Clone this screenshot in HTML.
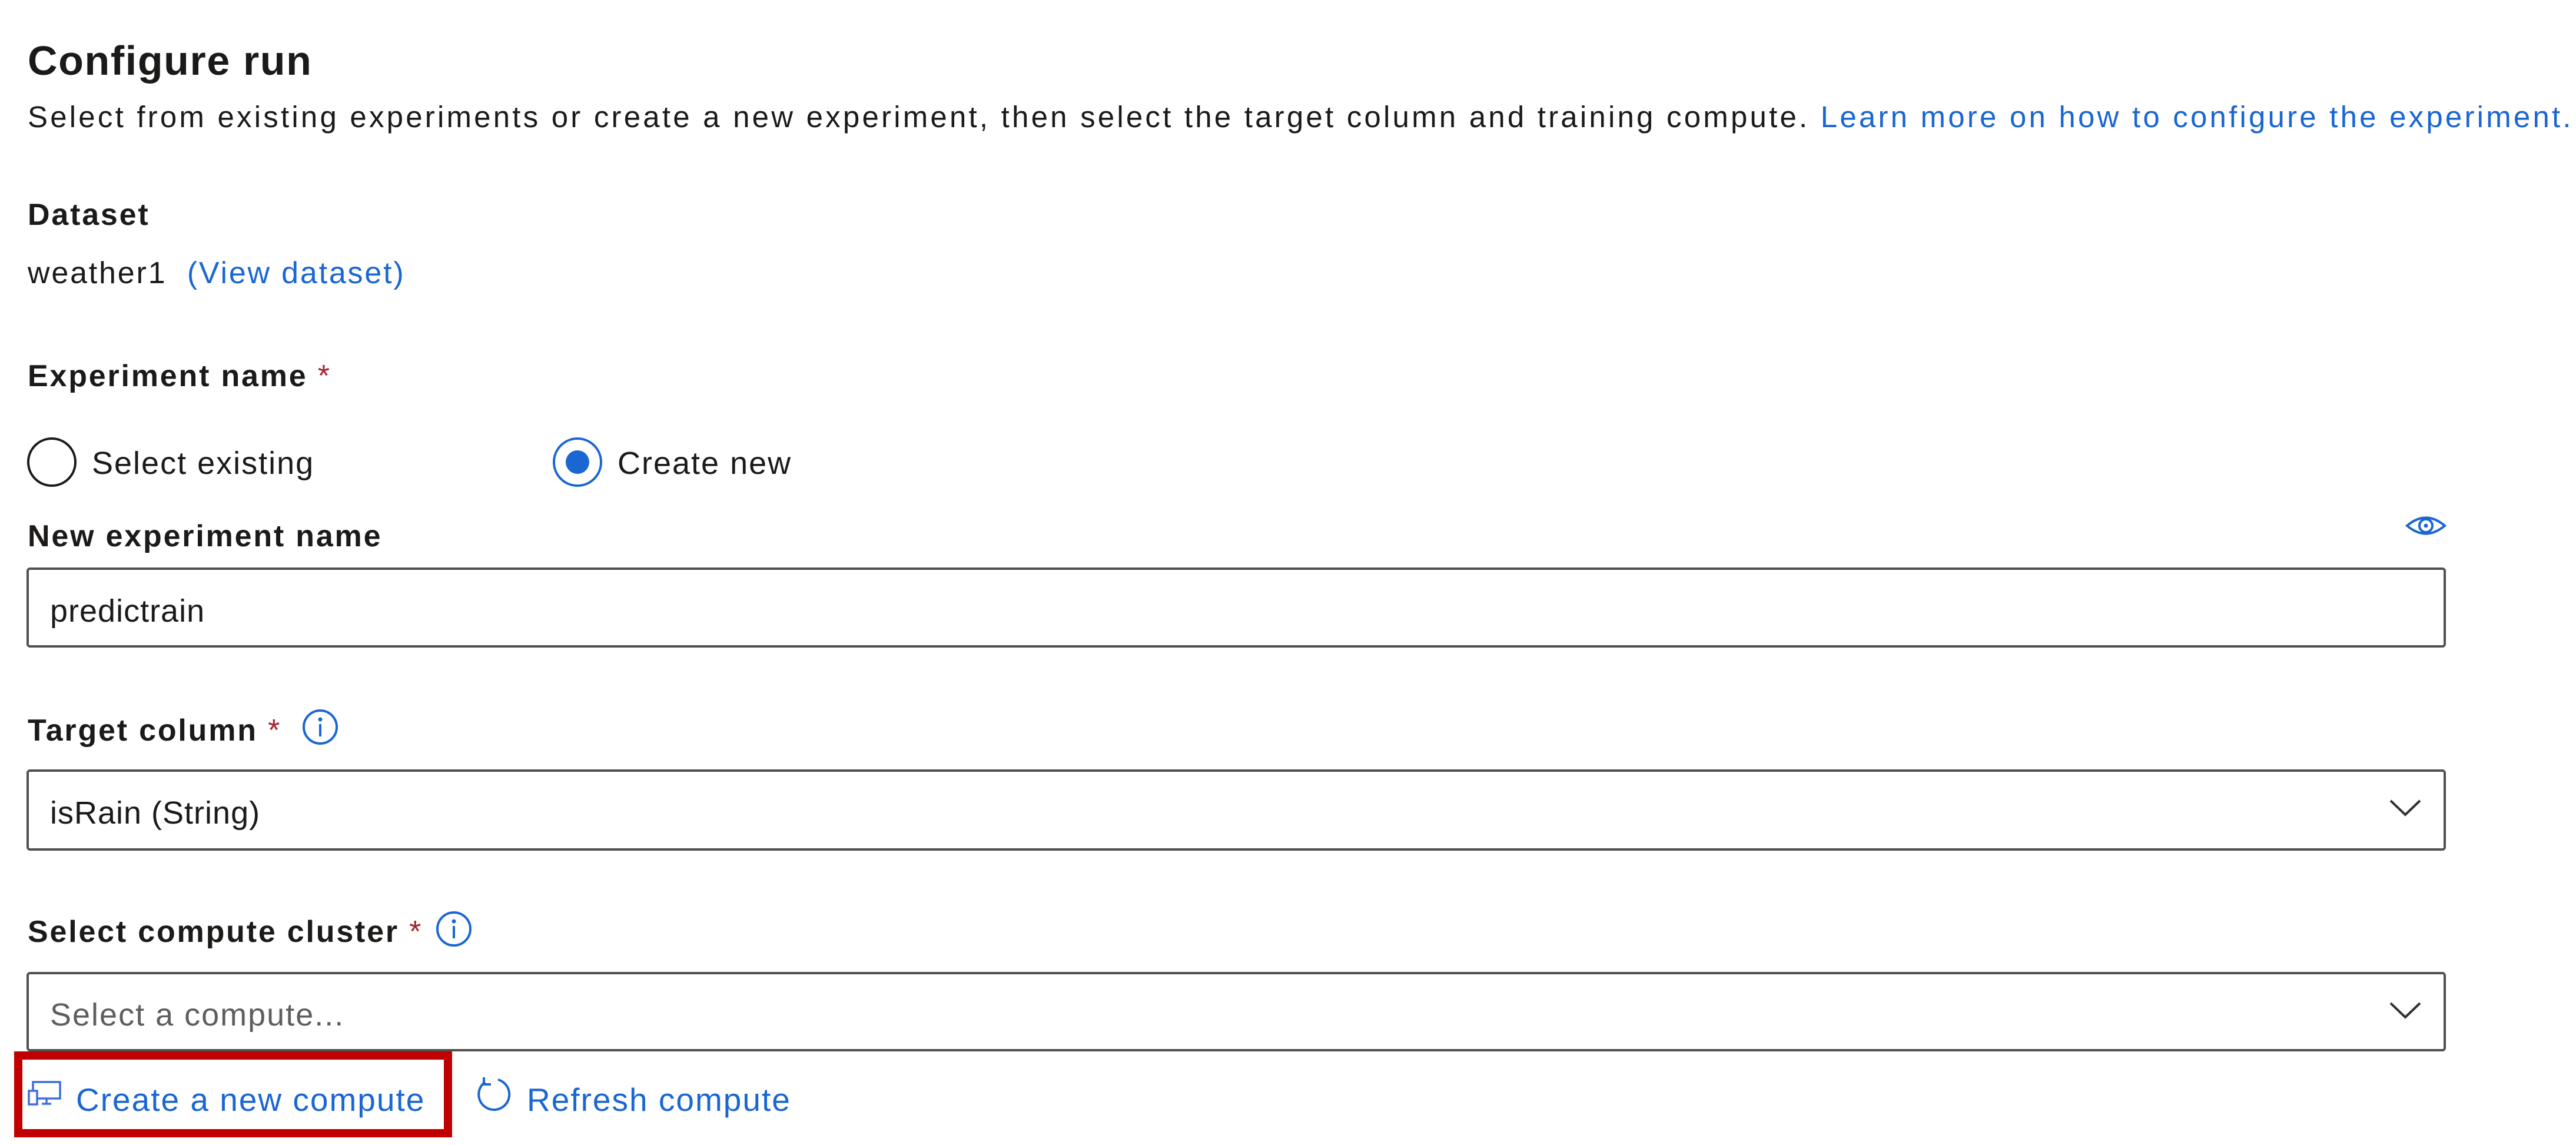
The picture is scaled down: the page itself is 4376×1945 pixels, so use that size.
<!DOCTYPE html>
<html><head><meta charset="utf-8"><style>
body{margin:0;width:4376px;height:1945px;background:#fff;position:relative;overflow:hidden;font-family:"Liberation Sans",sans-serif;color:#1b1a19}
.t{position:absolute;line-height:1;white-space:nowrap;letter-spacing:2px}
.b{font-weight:bold;letter-spacing:2.8px}
.l{color:#1a66d2}
.r{color:#a4262c}
.box{position:absolute;border:4px solid #505050;border-radius:6px;box-sizing:border-box;background:#fff}
</style></head><body>
<div class="t b" style="left:47px;top:68px;font-size:70px;letter-spacing:1.6px">Configure run</div>
<div class="t" style="left:47px;top:173px;font-size:51px;letter-spacing:4.2px">Select from existing experiments or create a new experiment, then select the target column and training compute. <span class="l">Learn more on how to configure the experiment.</span></div>
<div class="t b" style="left:47px;top:339px;font-size:52px">Dataset</div>
<div class="t" style="left:47px;top:438px;font-size:52px;letter-spacing:2.8px">weather1 &nbsp;<span class="l">(View dataset)</span></div>
<div class="t b" style="left:47px;top:613px;font-size:52px">Experiment name <span class="r" style="font-weight:normal">*</span></div>
<div style="position:absolute;left:46px;top:743px;width:84px;height:84px;border:4px solid #1b1a19;border-radius:50%;box-sizing:border-box"></div>
<div class="t" style="left:156px;top:760px;font-size:54px">Select existing</div>
<div style="position:absolute;left:939px;top:743px;width:84px;height:84px;border:4px solid #1a66d2;border-radius:50%;box-sizing:border-box"></div>
<div style="position:absolute;left:961px;top:765px;width:40px;height:40px;background:#1a66d2;border-radius:50%"></div>
<div class="t" style="left:1049px;top:760px;font-size:54px">Create new</div>
<div class="t b" style="left:47px;top:885px;font-size:52px">New experiment name</div>
<svg style="position:absolute;left:4086px;top:874px" width="70" height="38" viewBox="0 0 70 38"><path d="M3 19 Q35 -8 67 19 Q35 46 3 19Z" fill="none" stroke="#1a66d2" stroke-width="4"/><circle cx="35" cy="19" r="11" fill="none" stroke="#1a66d2" stroke-width="4"/><circle cx="35" cy="19" r="3.5" fill="#1a66d2"/></svg>
<div class="box" style="left:45px;top:964px;width:4110px;height:136px"></div>
<div class="t" style="left:85px;top:1011px;font-size:54px;letter-spacing:1px">predictrain</div>
<div class="t b" style="left:47px;top:1215px;font-size:52px">Target column <span class="r" style="font-weight:normal">*</span></div>
<svg style="position:absolute;left:512px;top:1203px" width="64" height="64" viewBox="0 0 64 64"><circle cx="32" cy="32" r="28" fill="none" stroke="#1a66d2" stroke-width="4"/><circle cx="32" cy="19" r="3.5" fill="#1a66d2"/><rect x="30" y="27" width="4" height="21" fill="#1a66d2"/></svg>
<div class="box" style="left:45px;top:1307px;width:4110px;height:138px"></div>
<div class="t" style="left:85px;top:1354px;font-size:54px;letter-spacing:1px">isRain (String)</div>
<svg style="position:absolute;left:4058px;top:1356px" width="56" height="34" viewBox="0 0 56 34"><path d="M3 4 L28 28 L53 4" fill="none" stroke="#323130" stroke-width="4"/></svg>
<div class="t b" style="left:47px;top:1557px;font-size:52px">Select compute cluster <span class="r" style="font-weight:normal">*</span></div>
<svg style="position:absolute;left:739px;top:1546px" width="64" height="64" viewBox="0 0 64 64"><circle cx="32" cy="32" r="28" fill="none" stroke="#1a66d2" stroke-width="4"/><circle cx="32" cy="19" r="3.5" fill="#1a66d2"/><rect x="30" y="27" width="4" height="21" fill="#1a66d2"/></svg>
<div class="box" style="left:45px;top:1651px;width:4110px;height:135px"></div>
<div class="t" style="left:85px;top:1697px;font-size:54px;color:#605e5c">Select a compute...</div>
<svg style="position:absolute;left:4058px;top:1700px" width="56" height="34" viewBox="0 0 56 34"><path d="M3 4 L28 28 L53 4" fill="none" stroke="#323130" stroke-width="4"/></svg>
<div style="position:absolute;left:24px;top:1786px;width:744px;height:146px;border:14px solid #c00000;box-sizing:border-box"></div>
<svg style="position:absolute;left:47px;top:1835px" width="58" height="45" viewBox="0 0 58 45"><rect x="9" y="3" width="46" height="28" fill="none" stroke="#3b6ee0" stroke-width="3.5"/><rect x="2" y="18" width="14" height="23" fill="#fff" stroke="#3b6ee0" stroke-width="3.5"/><path d="M32 31 V39 M24 40 H40" stroke="#3b6ee0" stroke-width="3.5"/></svg>
<div class="t l" style="left:129px;top:1841px;font-size:55px">Create a new compute</div>
<svg style="position:absolute;left:806px;top:1826px" width="64" height="64" viewBox="0 0 64 64"><path d="M40 8 A26 26 0 1 1 18 12" fill="none" stroke="#1a66d2" stroke-width="4"/><path d="M16 4 V16 H28" fill="none" stroke="#1a66d2" stroke-width="4"/></svg>
<div class="t l" style="left:895px;top:1841px;font-size:55px">Refresh compute</div>
</body></html>
